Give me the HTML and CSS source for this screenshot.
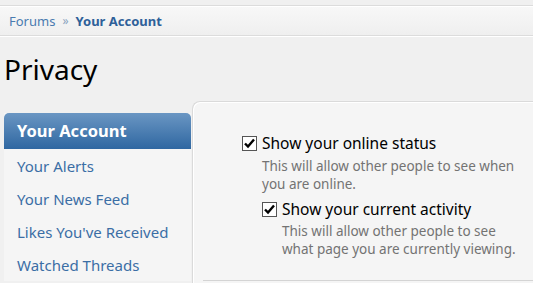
FILE: index.html
```html
<!DOCTYPE html>
<html lang="en">

<head>
  <meta charset="UTF-8">
  <title>Privacy</title>
  <link rel="stylesheet" href="styles.css">
</head>

<body>
  <div class="breadcrumb">
    <a href="#" class="crumb">Forums</a>
    <span class="arrow">&raquo;</span>
    <a href="#" class="crumb current">Your Account</a>
  </div>

  <h1 class="title">Privacy</h1>

  <div class="account-layout">
    <ul class="side-nav">
      <li class="active"><a href="#">Your Account</a></li>
      <li><a href="#">Your Alerts</a></li>
      <li><a href="#">Your News Feed</a></li>
      <li><a href="#">Likes You've Received</a></li>
      <li><a href="#">Watched Threads</a></li>
    </ul>

    <div class="main-panel">
      <div class="option">
        <label class="check-row">
          <span class="box">
            <svg viewBox="0 0 13 13" width="13" height="13"><path d="M2 6.5 L5 9.5 L11 2.5" fill="none" stroke="#000" stroke-width="2.4"/></svg>
          </span>
          <span>Show your online status</span>
        </label>
        <p class="hint">This will allow other people to see when<br>you are online.</p>

        <div class="option sub-option">
          <label class="check-row">
            <span class="box">
              <svg viewBox="0 0 13 13" width="13" height="13"><path d="M2 6.5 L5 9.5 L11 2.5" fill="none" stroke="#000" stroke-width="2.4"/></svg>
            </span>
            <span>Show your current activity</span>
          </label>
          <p class="hint">This will allow other people to see<br>what page you are currently viewing.</p>
        </div>
      </div>
      <div class="divider"></div>
    </div>
  </div>
</body>

</html>
```

FILE: styles.css
```css
body {
  margin: 0;
  background: #f0f0f0;
  font-family: "Noto Sans", "DejaVu Sans", sans-serif;
  font-size: 13px;
  color: #000;
  overflow: hidden;
}

a {
  text-decoration: none;
}

.breadcrumb {
  margin-top: 5px;
  height: 29px;
  border-top: 1px solid #dcdcdc;
  border-bottom: 1px solid #dcdcdc;
  box-shadow: inset 0 1px 0 #fff, 0 1px 0 #fff;
  background: linear-gradient(#f8f8f8, #efefef);
  display: flex;
  align-items: center;
  padding-left: 9px;
  font-size: 13px;
}

.crumb {
  color: #4a7bb0;
}

.crumb.current {
  font-weight: bold;
  color: #2e6099;
}

.arrow {
  color: #8aa4c0;
  margin: 0 7px;
  font-size: 12px;
}

.title {
  margin: 15px 0 0 4px;
  font-size: 28px;
  font-weight: normal;
  line-height: 36px;
  color: #000;
}

.account-layout {
  display: flex;
  align-items: flex-start;
  margin-top: 14px;
  padding-left: 4px;
}

.side-nav {
  list-style: none;
  margin: 12px 0 0;
  padding: 0;
  width: 187px;
  background: #f5f5f5;
}

.side-nav li a {
  display: block;
  height: 33px;
  line-height: 34px;
  padding-left: 13px;
  color: #3b6ea5;
  font-size: 15px;
  white-space: nowrap;
}

.side-nav li.active a {
  height: 36px;
  line-height: 36px;
  background: linear-gradient(#6a96c3, #2f67a1);
  border-radius: 5px 5px 0 0;
  color: #fff;
  font-weight: bold;
  font-size: 16.5px;
}

.main-panel {
  flex: 1;
  height: 182px;
  margin-left: 1px;
  background: #f5f5f5;
  border-top: 1px solid #dadada;
  border-left: 1px solid #dadada;
  border-top-left-radius: 8px;
  box-shadow: inset 1px 1px 0 #fff;
  padding: 31px 0 0 49px;
  box-sizing: border-box;
}

.check-row {
  display: flex;
  align-items: center;
  font-size: 15.5px;
  line-height: 20px;
}

.box {
  width: 13px;
  height: 13px;
  border: 1px solid #555;
  background: #fff;
  margin-right: 5px;
  display: flex;
}

.hint {
  margin: 4px 0 0 20px;
  color: #737373;
  font-size: 13.5px;
  line-height: 18px;
  white-space: nowrap;
}

.sub-option {
  margin: 6px 0 0 20px;
}

.sub-option .hint {
  margin-top: 3px;
}

.divider {
  margin: 22px 0 0 -39px;
  border-top: 1px solid #d4d4d4;
}
```
